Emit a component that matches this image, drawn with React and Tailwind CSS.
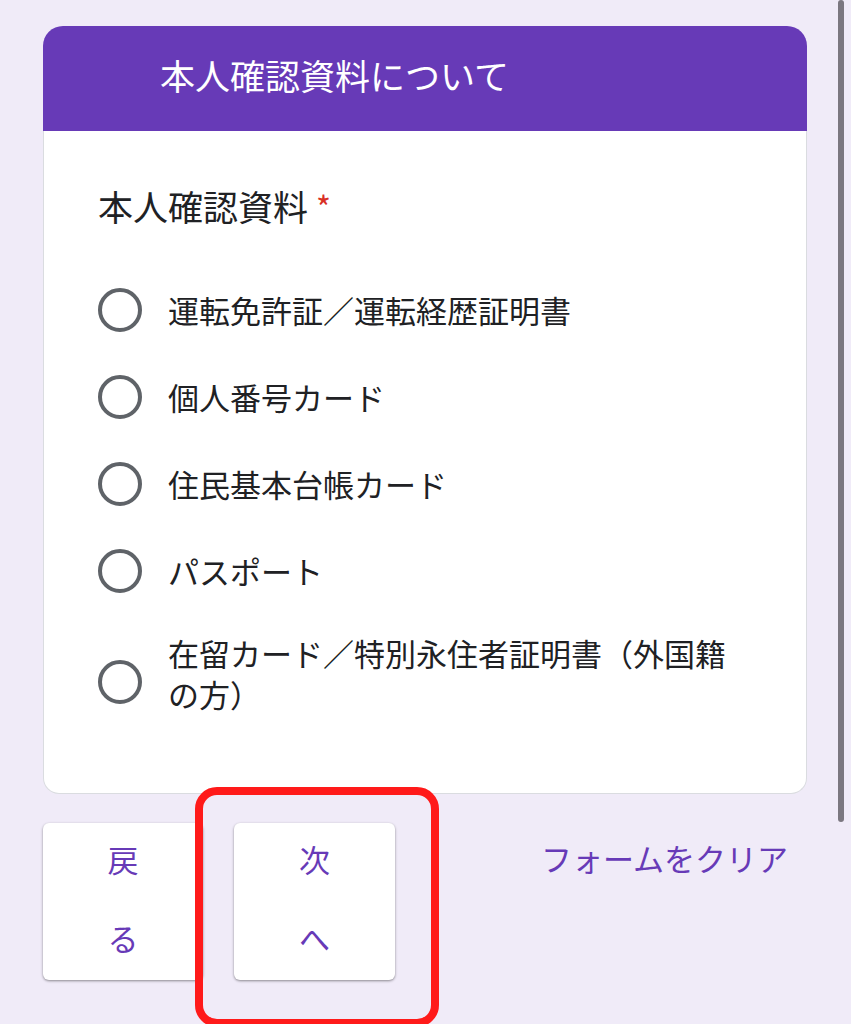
import React from 'react';

const options = [
  '運転免許証／運転経歴証明書',
  '個人番号カード',
  '住民基本台帳カード',
  'パスポート',
  '在留カード／特別永住者証明書（外国籍の方）',
];

const App = () => {
  return (
    <div
      className="relative min-h-screen bg-[#f0ebf8] overflow-hidden"
      style={{ fontFamily: '"Noto Sans CJK JP", "Noto Sans", sans-serif' }}
    >
      {/* scrollbar thumb */}
      <div className="absolute top-0 right-[7px] w-[6px] h-[822px] bg-[#7b7780] rounded-full"></div>

      <div className="pt-[26px] pl-[43px] w-[807px]">
        {/* Card */}
        <div className="w-[764px]">
          <div className="h-[105px] bg-[#673ab7] rounded-t-[20px] flex items-center pl-[117px] pb-[7px]">
            <h1 className="text-white text-[35px] leading-[44px] font-normal">本人確認資料について</h1>
          </div>

          <div className="bg-white border border-t-0 border-[#dadce0] rounded-b-[16px] pl-[54px] pr-[50px] pt-[53px] pb-[51px]">
            <div className="h-[44px] text-[35px] leading-[44px] text-[#202124]">
              本人確認資料<span className="text-[#d93025] text-[32px] ml-[8px] align-top">*</span>
            </div>

            <div className="mt-[38px] flex flex-col">
              {options.map((opt, i) => {
                const last = i === options.length - 1;
                return (
                  <div
                    key={i}
                    className={`flex gap-[26px] ${last ? 'items-start pt-[18px] pb-[28px]' : 'items-center h-[87px]'}`}
                  >
                    <div
                      className={`w-[44px] h-[44px] shrink-0 rounded-full border-[4px] border-[#5f6368] ${last ? 'mt-[28px]' : ''}`}
                    ></div>
                    <div className="text-[31px] leading-[41px] text-[#202124]">{opt}</div>
                  </div>
                );
              })}
            </div>
          </div>
        </div>

        {/* Buttons */}
        <div className="mt-[29px] flex items-start">
          <button className="w-[160px] h-[157px] bg-white rounded-[6px] shadow-[0_1px_3px_rgba(0,0,0,0.3),0_1px_2px_rgba(0,0,0,0.15)] flex items-center justify-center">
            <span className="w-[31px] text-[31px] leading-[79px] text-[#673ab7] -mt-[8px] block">戻る</span>
          </button>
          <button className="ml-[31px] w-[161px] h-[157px] bg-white rounded-[6px] shadow-[0_1px_3px_rgba(0,0,0,0.3),0_1px_2px_rgba(0,0,0,0.15)] flex items-center justify-center">
            <span className="w-[31px] text-[31px] leading-[79px] text-[#673ab7] -mt-[8px] block">次へ</span>
          </button>
          <span className="ml-auto mr-[19px] mt-[14px] text-[31px] leading-[41px] text-[#673ab7]">フォームをクリア</span>
        </div>
      </div>

      {/* red annotation outline */}
      <div className="absolute left-[195px] top-[787px] w-[244px] h-[240px] border-[8px] border-[#ff1a1a] rounded-[22px] pointer-events-none"></div>
    </div>
  );
};

export default App;
